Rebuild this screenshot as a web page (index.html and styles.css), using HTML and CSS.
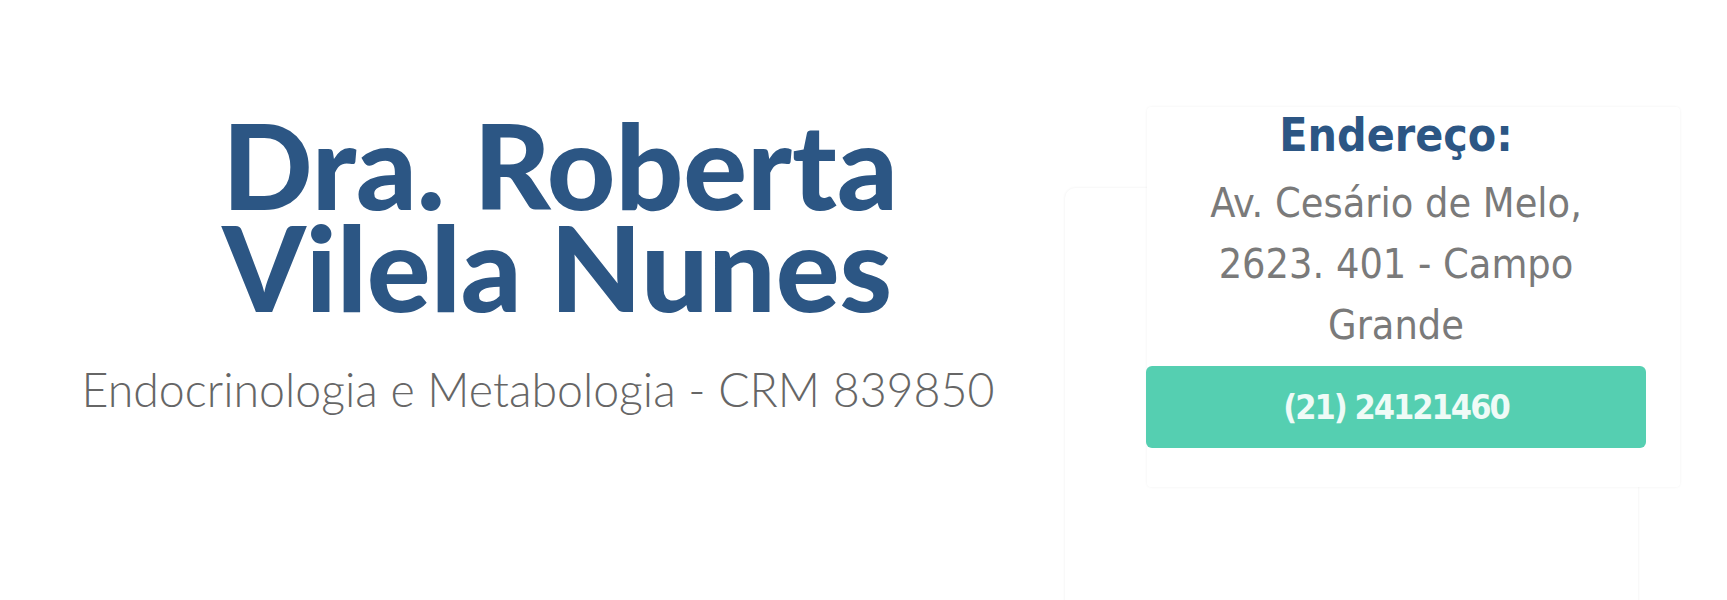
FILE: index.html
```html
<!DOCTYPE html>
<html lang="pt-BR">
<head>
<meta charset="utf-8">
<title>Dra. Roberta Vilela Nunes</title>
<link rel="stylesheet" href="styles.css">
</head>
<body>
<main class="page">
  <section class="intro">
    <h1 class="name"><span class="name-line">Dra. Roberta</span><span class="name-line">Vilela Nunes</span></h1>
    <p class="specialty">Endocrinologia e Metabologia - CRM 839850</p>
  </section>
  <aside class="contact">
    <div class="card">
      <h2 class="card-title">Endereço:</h2>
      <p class="address">Av. Cesário de Melo,<br>2623. 401 - Campo<br>Grande</p>
      <a class="phone" href="#">(21) 24121460</a>
    </div>
  </aside>
</main>
</body>
</html>
```
FILE: styles.css
```css
html, body {
  margin: 0;
  padding: 0;
  background: #ffffff;
}
body {
  font-family: Lato, "Noto Sans", sans-serif;
  overflow: hidden;
  height: 600px;
}
.page {
  display: flex;
  align-items: flex-start;
  height: 600px;
  overflow: hidden;
}
.intro {
  width: 1076px;
  display: flex;
  flex-direction: column;
  align-items: center;
  padding-top: 113px;
}
.name {
  margin: 0 0 0 44px;
  display: flex;
  flex-direction: column;
  font-family: Lato, sans-serif;
  font-weight: 900;
  font-size: 119px;
  color: #2c5684;
  text-align: left;
}
.name-line {
  display: block;
  height: 102px;
  line-height: 102px;
}
.specialty {
  margin: 45px 0 0 0;
  font-family: Lato, sans-serif;
  font-weight: 300;
  font-size: 46.5px;
  line-height: 55px;
  color: #666666;
  text-align: center;
}
.contact {
  position: relative;
  flex: 1;
  height: 600px;
}
.contact::before {
  content: "";
  position: absolute;
  left: -11px;
  top: 188px;
  width: 573px;
  height: 460px;
  border-radius: 10px;
  background: #fff;
  box-shadow: 0 0 3px rgba(0, 0, 0, 0.07);
}
.card {
  position: relative;
  margin-left: 71px;
  margin-top: 107px;
  width: 533px;
  height: 380px;
  box-sizing: border-box;
  padding-right: 35px;
  display: flex;
  flex-direction: column;
  align-items: center;
  background: #fff;
  box-shadow: 0 0 3px rgba(0, 0, 0, 0.06);
  border-radius: 4px;
}
.card-title {
  margin: 0;
  font-family: "DejaVu Sans Condensed", "DejaVu Sans", sans-serif;
  font-stretch: condensed;
  font-weight: 700;
  font-size: 46px;
  line-height: 56px;
  color: #2c5684;
}
.address {
  margin: 10px 0 0 0;
  font-family: "DejaVu Sans Condensed", "DejaVu Sans", sans-serif;
  font-stretch: condensed;
  font-weight: 400;
  font-size: 41px;
  line-height: 61px;
  color: #7a7a7a;
  text-align: center;
}
.phone {
  margin-top: 10px;
  width: 500px;
  height: 82px;
  display: flex;
  align-items: center;
  justify-content: center;
  background: #55cfb1;
  border-radius: 6px;
  font-family: "DejaVu Sans Condensed", "DejaVu Sans", sans-serif;
  font-stretch: condensed;
  font-weight: 700;
  font-size: 34px;
  letter-spacing: -2px;
  color: #effbf7;
  text-decoration: none;
}
```
